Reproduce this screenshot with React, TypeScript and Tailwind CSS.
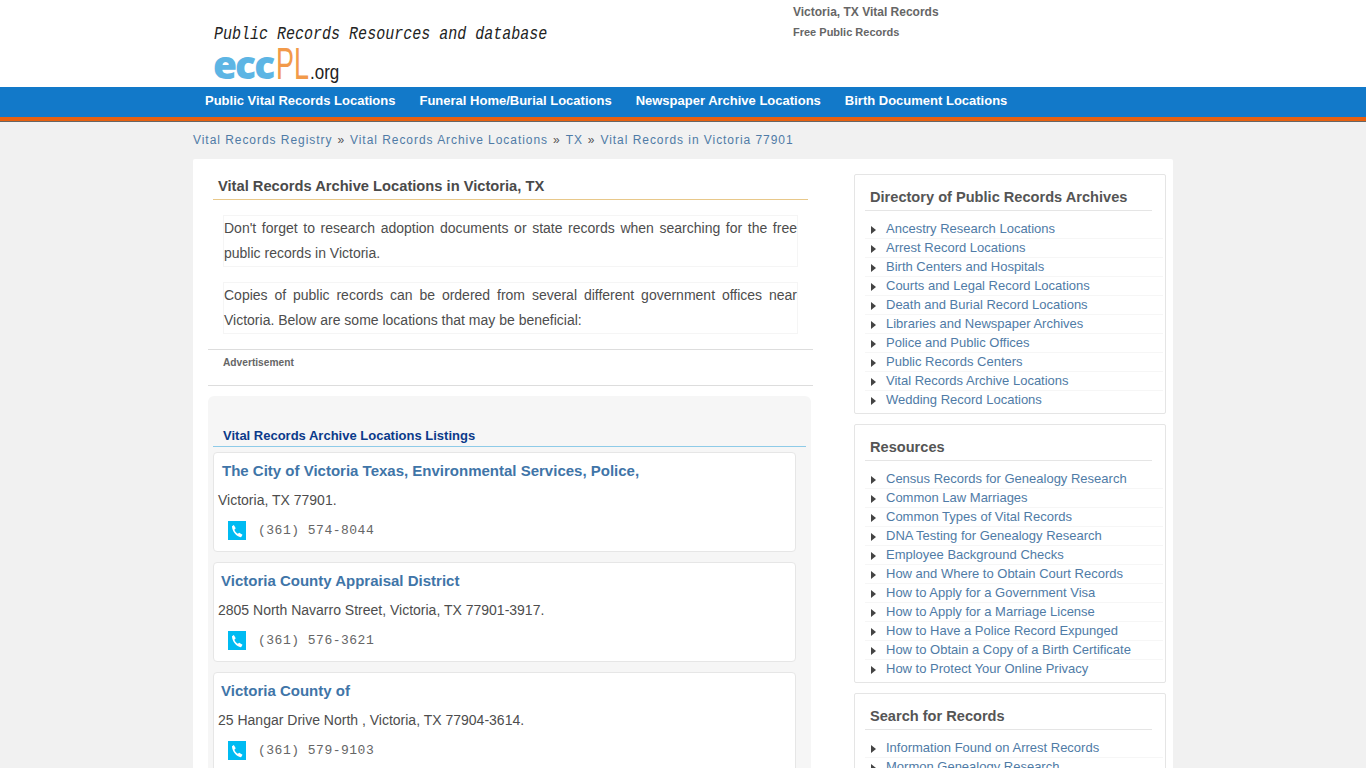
import React from 'react';

const nav = [
  'Public Vital Records Locations',
  'Funeral Home/Burial Locations',
  'Newspaper Archive Locations',
  'Birth Document Locations',
];

const directory = [
  'Ancestry Research Locations',
  'Arrest Record Locations',
  'Birth Centers and Hospitals',
  'Courts and Legal Record Locations',
  'Death and Burial Record Locations',
  'Libraries and Newspaper Archives',
  'Police and Public Offices',
  'Public Records Centers',
  'Vital Records Archive Locations',
  'Wedding Record Locations',
];

const resources = [
  'Census Records for Genealogy Research',
  'Common Law Marriages',
  'Common Types of Vital Records',
  'DNA Testing for Genealogy Research',
  'Employee Background Checks',
  'How and Where to Obtain Court Records',
  'How to Apply for a Government Visa',
  'How to Apply for a Marriage License',
  'How to Have a Police Record Expunged',
  'How to Obtain a Copy of a Birth Certificate',
  'How to Protect Your Online Privacy',
];

const search = ['Information Found on Arrest Records', 'Mormon Genealogy Research'];

const listings = [
  { name: 'The City of Victoria Texas, Environmental Services, Police,', address: 'Victoria, TX 77901.', phone: '(361) 574-8044', pad: 'pl-[4px]' },
  { name: 'Victoria County Appraisal District', address: '2805 North Navarro Street, Victoria, TX 77901-3917.', phone: '(361) 576-3621', pad: 'pl-[3px]' },
  { name: 'Victoria County of', address: '25 Hangar Drive North , Victoria, TX 77904-3614.', phone: '(361) 579-9103', pad: 'pl-[3px]' },
];

function SideBox({ title, items }: { title: string; items: string[] }) {
  return (
    <div className="border border-[#e5e5e5] rounded-[2px] pl-[10px] pr-[2px] pb-[3px] bg-white">
      <h3 className="mr-[11px] h-[36px] pt-[12px] pl-[5px] border-b border-[#e5e5e5] text-[14.6px] leading-[20px] font-bold text-[#555] whitespace-nowrap">
        {title}
      </h3>
      <ul className="mt-[9px]">
        {items.map((item) => (
          <li key={item} className="flex items-center h-[19px] border-b border-[#f6f6f6] last:border-transparent text-[13px] text-[#4f7ba6]">
            <svg width="5" height="8" viewBox="0 0 5 8" className="ml-[6px] mr-[10px] mt-[2px] shrink-0">
              <path d="M0 0 L5 4 L0 8 Z" fill="#444" />
            </svg>
            <span>{item}</span>
          </li>
        ))}
      </ul>
    </div>
  );
}

function PhoneIcon() {
  return (
    <span className="flex items-center justify-center w-[18px] h-[19px] bg-[#00bbf2]">
      <svg width="14" height="14" viewBox="0 0 24 24" fill="#fff">
        <path d="M6.6 1.5 L9.8 7.2 L7.6 9.8 C8.4 12.4 10.6 15.2 13.4 16.8 L15.8 14.8 L21.5 18.6 L19 22.5 C12 23 3.5 13 3.4 4 Z" />
      </svg>
    </span>
  );
}

export default function App() {
  return (
    <div className="h-[768px] overflow-hidden bg-[#f1f1f1] font-['Liberation_Sans',Arial,sans-serif]">
      <header className="bg-white h-[87px]">
        <div className="w-[980px] ml-[193px] flex">
          <div className="w-[600px] pl-[21px] pt-[22px]">
            <div className="font-['Liberation_Mono',monospace] italic text-[19px] leading-[24px] text-[#222] scale-x-[0.79] origin-left whitespace-nowrap">
              Public Records Resources and database
            </div>
            <div className="flex items-end h-[36px] whitespace-nowrap">
              <span className="font-['Open_Sans',sans-serif] font-extrabold text-[39px] leading-[36px] text-[#5db5e4] tracking-[-2px] -ml-[1px]">ecc</span>
              <span className="ml-[3px] w-[34px] text-[45px] leading-[36px] text-[#f29a4a] scale-x-[0.6] origin-left">PL</span>
              <span className="text-[20px] leading-[20px] text-[#222] scale-x-[0.85] origin-left">.org</span>
            </div>
          </div>
          <div className="pt-[5px] text-[12px] font-bold text-[#666]">
            <div className="leading-[14px]">Victoria, TX Vital Records</div>
            <div className="text-[11px] leading-[14px] mt-[6px]">Free Public Records</div>
          </div>
        </div>
      </header>

      <nav className="h-[34px] bg-[#1279c9] border-b-[4px] border-[#e8600f] shadow-[0_1px_0_#666]">
        <ul className="flex ml-[205px] gap-[24px] h-[27px] items-center text-[13px] font-bold text-white">
          {nav.map((n) => (
            <li key={n} className="whitespace-nowrap">{n}</li>
          ))}
        </ul>
      </nav>

      <div className="ml-[193px] pt-[12px] h-[38px] text-[12px] leading-[14px] tracking-[0.95px] text-[#4f7ba6] flex gap-[5px]">
        <span>Vital Records Registry</span><span className="text-[#555]">»</span>
        <span>Vital Records Archive Locations</span><span className="text-[#555]">»</span>
        <span>TX</span><span className="text-[#555]">»</span>
        <span>Vital Records in Victoria 77901</span>
      </div>

      <main className="w-[980px] ml-[193px] bg-white flex rounded-[2px] h-[640px]">
        <div className="w-[661px] pl-[15px] shrink-0">
          <div className="w-[605px]">
            <h1 className="mt-[17px] ml-[5px] h-[23px] w-[590px] pl-[5px] border-b border-[#e8c88a] text-[14.7px] leading-[20px] font-bold text-[#4a4a4a] box-content">
              Vital Records Archive Locations in Victoria, TX
            </h1>
            <div className="ml-[15px] w-[575px] mt-[15px] text-[14px] leading-[25px] text-[#4d4d4d] text-justify">
              <p className="border border-[#f5f5f5] h-[52px]">
                Don't forget to research adoption documents or state records when searching for the free public records in Victoria.
              </p>
              <p className="border border-[#f5f5f5] h-[52px] mt-[15px]">
                Copies of public records can be ordered from several different government offices near Victoria. Below are some locations that may be beneficial:
              </p>
            </div>
            <div className="mt-[15px] border-t border-b border-[#ddd] h-[37px] pl-[15px] pt-[6px] text-[10.2px] leading-[14px] font-bold text-[#666]">
              Advertisement
            </div>
          </div>
          <section className="mt-[10px] w-[603px] bg-[#f6f6f6] rounded-[6px] pl-[5px] pb-[20px]">
            <h2 className="pt-[32px] pl-[10px] h-[51px] w-[593px] border-b border-[#8ecbe8] text-[13px] leading-[16px] font-bold text-[#0b3a8a] box-border">
              Vital Records Archive Locations Listings
            </h2>
            <div className="w-[583px] mt-[5px] flex flex-col gap-[10px]">
              {listings.map((l) => (
                <article key={l.name} className="h-[100px] bg-white border border-[#e6e6e6] rounded-[4px] pl-[4px]">
                  <h4 className={`${l.pad} pt-[9px] text-[15px] leading-[18px] font-bold text-[#3f75a8]`}>
                    {l.name}
                  </h4>
                  <p className="mt-[10px] text-[14px] leading-[20px] text-[#4d4d4d]">{l.address}</p>
                  <div className="mt-[11px] ml-[10px] flex items-center gap-[12px]">
                    <PhoneIcon />
                    <span className="font-['Liberation_Mono',monospace] text-[13px] tracking-[0.5px] text-[#666]">{l.phone}</span>
                  </div>
                </article>
              ))}
            </div>
          </section>
        </div>
        <aside className="w-[312px] shrink-0 pt-[15px] flex flex-col gap-[10px]">
          <SideBox title="Directory of Public Records Archives" items={directory} />
          <SideBox title="Resources" items={resources} />
          <SideBox title="Search for Records" items={search} />
        </aside>
      </main>
    </div>
  );
}
